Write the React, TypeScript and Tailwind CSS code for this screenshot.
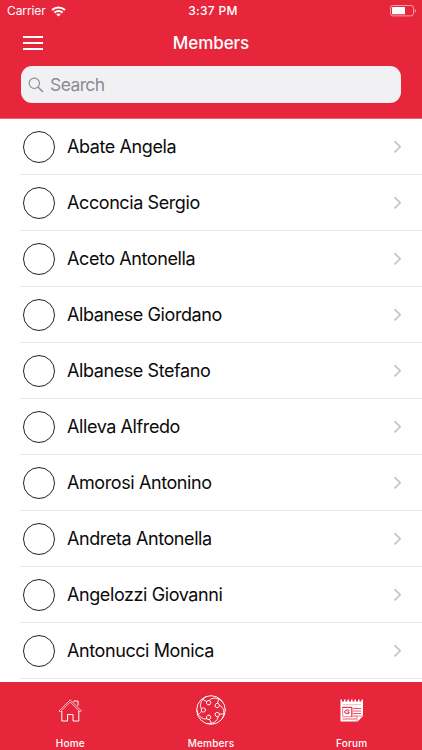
import React from "react";

const members = [
  "Abate Angela",
  "Acconcia Sergio",
  "Aceto Antonella",
  "Albanese Giordano",
  "Albanese Stefano",
  "Alleva Alfredo",
  "Amorosi Antonino",
  "Andreta Antonella",
  "Angelozzi Giovanni",
  "Antonucci Monica",
];

function StatusBar() {
  return (
    <div className="flex h-[22px] items-center justify-between pr-[5px] pl-[7px]">
      <div className="flex w-[80px] items-center gap-[5px]">
        <span className="text-[12px] leading-[22px] tracking-[-0.1px]">Carrier</span>
        <svg width="15" height="11" viewBox="0 0 15 11" fill="none" stroke="white" strokeWidth="2.1">
          <path d="M1 4.1C4.8.6 10.2.6 14 4.1" />
          <path d="M3.4 6.6c2.4-2.1 5.8-2.1 8.2 0" />
          <path d="M7.5 10.6 5.2 8.3c1.3-1.1 3.3-1.1 4.6 0z" fill="white" stroke="none" />
        </svg>
      </div>
      <span className="pl-[2px] text-[12px] leading-[22px] font-medium tracking-[0.3px]">3:37 PM</span>
      <div className="flex w-[80px] justify-end">
        <svg width="28" height="12" viewBox="0 0 28 12" fill="none">
          <rect x="1.5" y=".5" width="23" height="10.4" rx="2.4" stroke="white" strokeOpacity=".55" />
          <rect x="3" y="2.1" width="13" height="7.2" rx=".6" fill="white" />
          <path d="M25.7 3.9c1.8.5 1.8 3.2 0 3.7z" fill="white" fillOpacity=".55" />
        </svg>
      </div>
    </div>
  );
}

function HomeIcon() {
  return (
    <svg width="32" height="32" viewBox="0 0 32 32" fill="none" stroke="white" strokeWidth="1">
      <path d="M5 17 16.2 5.8 27.4 17l-1.3 1L16.2 8 6.3 18z" strokeWidth=".7" />
      <path d="M7.8 17v10h5.8v-6.5h5.4V27h5.8V17M20 8V7h4v4.8" />
    </svg>
  );
}

function MembersIcon() {
  return (
    <svg width="32" height="32" viewBox="-16 -16 32 32" fill="none" stroke="white" strokeWidth=".85" strokeLinecap="round">
      <circle r="14.3" strokeWidth=".95" />
      {[0, 72, 144, 216, 288].map((angle) => (
        <g key={angle} transform={`rotate(${angle})`}>
          <circle cx="-7.7" cy="0" r="2.2" />
          <path d="M-4.5 -13.4C-9.5 -11 -12.3 -5 -9.6 -1.2" />
          <path d="M-9.4 1.4C-11 3.4 -12.3 4.2 -13.2 4.8" />
        </g>
      ))}
    </svg>
  );
}

function ForumIcon() {
  return (
    <svg width="32" height="32" viewBox="0 0 32 32" fill="none">
      <path
        d="M4.5 5.5H6v2h2v-2h1.5v2h2v-2H13v2h2v-2h1.5v2h2v-2H20v2h2v-2h1.5v2h2v-2H27V22l-5.3 5.5H4.5z"
        fill="white"
      />
      <path d="M6.5 10.6h18.5" stroke="#e7263c" strokeWidth=".3" />
      <path d="M17 14.5h8M17 17h8M17 19.5h8M17 22h4M6.5 25h14" stroke="#e7263c" strokeWidth=".8" />
      <path d="M6.7 13.3h8.8v9.4H6.7z" stroke="#e7263c" strokeWidth=".6" />
      <path d="M6.3 13.4H16v9.8" stroke="#e7263c" strokeWidth=".9" />
      <path d="M13.6 16.3c-3-.9-5 .1-5 1.7s2.4 2.2 4.5 1.3V18h-2.3" stroke="#e7263c" strokeWidth="1" />
      <path d="M21 27v-5h5.3" stroke="#e7263c" strokeWidth=".6" />
    </svg>
  );
}

const tabs = [
  { label: "Home", icon: <HomeIcon /> },
  { label: "Members", icon: <MembersIcon /> },
  { label: "Forum", icon: <ForumIcon /> },
];

export default function App() {
  return (
    <div className="flex h-[750px] w-[422px] flex-col overflow-hidden bg-white font-['Inter','Liberation_Sans',sans-serif]">
      <header className="h-[119px] shrink-0 border-b border-[#ee6675] bg-[#e7263c] text-white">
        <StatusBar />
        <div className="grid h-[44px] grid-cols-[1fr_auto_1fr] items-center pb-[2px] pl-[23px]">
          <button className="flex w-[20px] flex-col gap-[4px]" aria-label="Menu">
            <span className="h-[2px] bg-white" />
            <span className="h-[2px] bg-white" />
            <span className="h-[2px] bg-white" />
          </button>
          <h1 className="pr-[23px] text-[17px] leading-[42px] font-medium tracking-[-0.05px]">Members</h1>
        </div>
        <div className="mr-[21px] ml-[21px] flex h-[37px] items-center gap-[6px] rounded-[11px] bg-[#f1f1f4] pl-[7px] text-[#8b8b90]">
          <svg width="16" height="16" viewBox="0 0 16 16" fill="none" stroke="currentColor" strokeWidth="1.1">
            <circle cx="6.3" cy="6.3" r="5.2" />
            <path d="m10 10 5 5" strokeWidth="1.5" />
          </svg>
          <span className="text-[17.5px] leading-[36px] tracking-[-0.6px]">Search</span>
        </div>
      </header>

      <main className="min-h-0 flex-1 overflow-hidden">
        {members.map((name) => (
          <div key={name} className="ml-[20px] flex h-[56px] items-center border-b border-[#e6e6e9] pr-[20px] pl-[3px]">
            <span className="size-[32px] rounded-full border border-[#222]" />
            <span className="ml-[12px] flex-1 text-[18px] tracking-[-0.41px] text-[#0b0b0b]">{name}</span>
            <svg width="9" height="14" viewBox="0 0 9 14" fill="none" stroke="#c5c5ca" strokeWidth="1.8">
              <path d="m1.5 1.2 5.6 5.6-5.6 5.6" />
            </svg>
          </div>
        ))}
      </main>

      <nav className="grid h-[68px] shrink-0 grid-cols-3 bg-[#e7263c] text-white">
        {tabs.map((tab) => (
          <div key={tab.label} className="flex flex-col items-center pt-[12px]">
            {tab.icon}
            <span className="mt-[9px] text-[10px] leading-[16px] font-medium tracking-[0.2px]">{tab.label}</span>
          </div>
        ))}
      </nav>
    </div>
  );
}
